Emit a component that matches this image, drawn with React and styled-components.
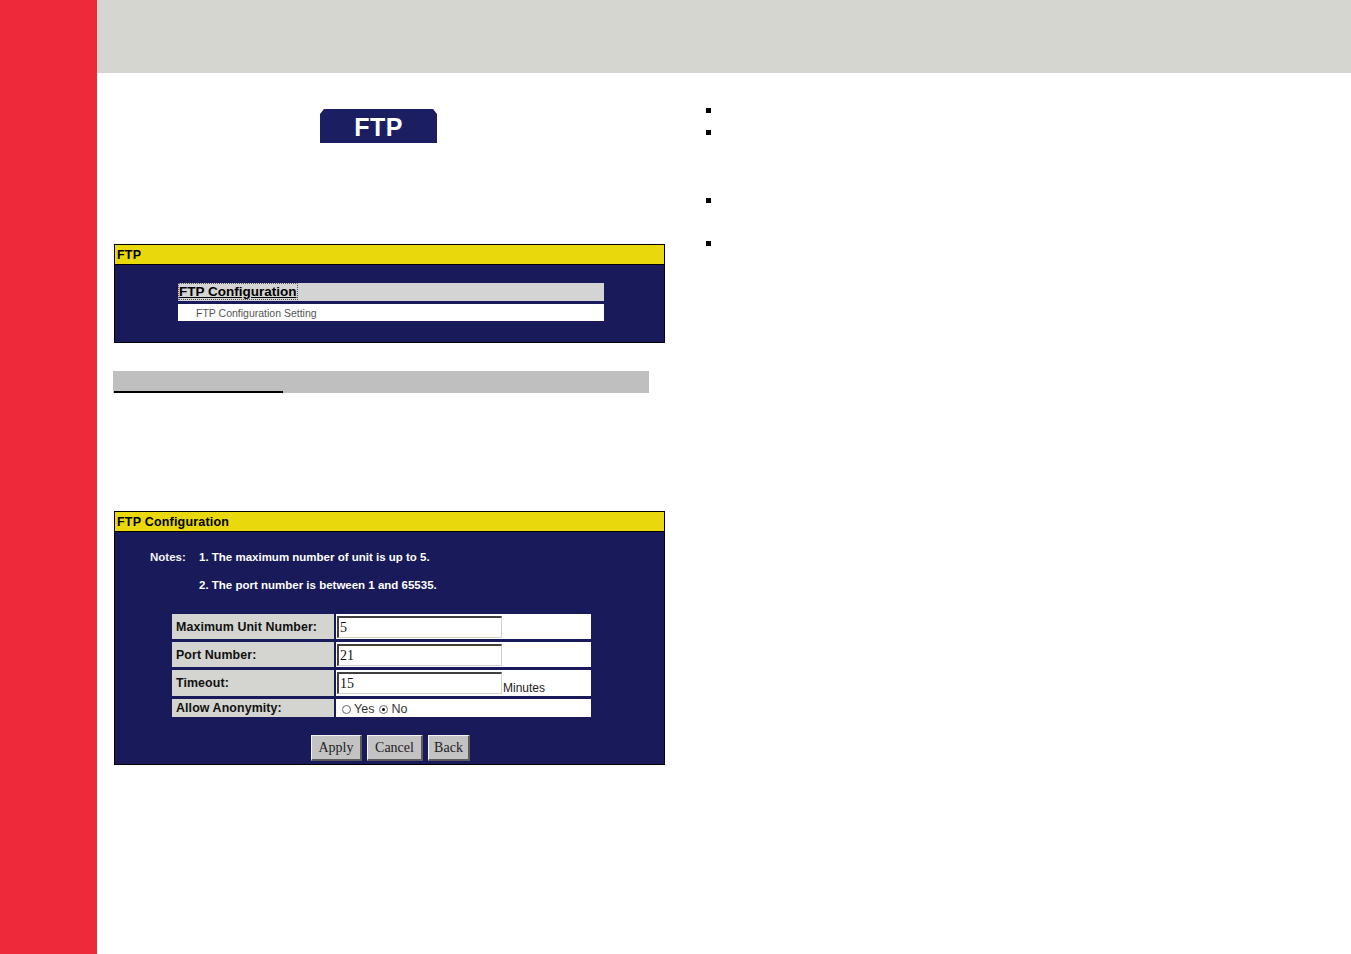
import React from 'react';
import styled, { createGlobalStyle } from 'styled-components';

const GlobalStyle = createGlobalStyle`
  html, body {
    margin: 0;
    padding: 0;
    background: #ffffff;
  }
  body {
    font-family: "Liberation Sans", Arial, sans-serif;
    overflow: hidden;
  }
`;

const Page = styled.div`
  display: flex;
  width: 1351px;
  height: 954px;
`;

const Sidebar = styled.div`
  width: 97px;
  flex-shrink: 0;
  background: #ee2a3a;
`;

const Main = styled.div`
  flex: 1;
  display: flex;
  flex-direction: column;
`;

const TopBar = styled.div`
  height: 73px;
  background: #d6d6d1;
`;

const Body = styled.div`
  display: flex;
`;

const LeftColumn = styled.div`
  width: 568px;
  padding-left: 17px;
  display: flex;
  flex-direction: column;
`;

const RightColumn = styled.ul`
  list-style: none;
  margin: 0;
  padding: 0 0 0 24px;
  display: flex;
  flex-direction: column;
`;

const Bullet = styled.li`
  width: 5px;
  height: 5px;
  background: #000;
  margin-top: ${({ $gap }) => $gap}px;
`;

const FtpBadge = styled.div`
  margin: 36px 0 0 206px;
  width: 117px;
  height: 34px;
  background: #1b1f62;
  clip-path: polygon(4px 0, calc(100% - 4px) 0, 100% 5px, 100% 100%, 0 100%, 0 5px);
  display: flex;
  align-items: center;
  justify-content: center;
  padding-top: 3px;
  box-sizing: border-box;
  color: #ffffff;
  font-family: "Liberation Sans", Arial, sans-serif;
  font-weight: bold;
  font-size: 25px;
  letter-spacing: 0.5px;
`;

const Panel = styled.div`
  margin-top: ${({ $top }) => $top}px;
  width: 549px;
  height: ${({ $height }) => $height}px;
  border: 1px solid #000;
  background: #181a5a;
  display: flex;
  flex-direction: column;
`;

const PanelHeader = styled.div`
  height: 19px;
  background: #e8d80c;
  border-bottom: 1px solid #000;
  padding-left: 2px;
  font-size: 12.5px;
  font-weight: bold;
  color: #000;
  line-height: 20px;
  letter-spacing: 0.2px;
`;

const MenuBox = styled.div`
  margin: 18px 0 0 63px;
  width: 426px;
  display: flex;
  flex-direction: column;
  gap: 3px;
`;

const MenuTitle = styled.div`
  height: 18px;
  background: #d4d4d4;
  padding-left: 1px;
  font-size: 13.5px;
  font-weight: bold;
  line-height: 18px;
  color: #000;

  span {
    text-decoration: underline;
    outline: 1px dotted #555;
  }
`;

const MenuItem = styled.div`
  height: 17px;
  background: #ffffff;
  padding-left: 18px;
  font-size: 10.5px;
  line-height: 18px;
  color: #555;
`;

const SectionBar = styled.div`
  margin: 28px 0 0 -1px;
  width: 536px;
  height: 22px;
  background: #bfbfbf;
  display: flex;
  align-items: flex-end;
`;

const SectionLine = styled.div`
  margin-left: 1px;
  width: 169px;
  height: 2px;
  background: #000;
`;

const Notes = styled.div`
  margin: 18px 0 0 35px;
  display: grid;
  grid-template-columns: 49px auto;
  row-gap: 13px;
  color: #ffffff;
  font-size: 11.5px;
  font-weight: bold;
  line-height: 15px;
`;

const NoteLabel = styled.span`
  font-weight: bold;
  opacity: 0.95;
`;

const FormTable = styled.div`
  margin: 20px 0 0 57px;
  width: 420px;
  display: grid;
  grid-template-columns: 162px 255px;
  grid-template-rows: 25px 25px 26px 18px;
  column-gap: 2px;
  row-gap: 3px;
  padding: 1px 2px 1px 0;
`;

const LabelCell = styled.div`
  background: #d4d5d0;
  padding-left: 4px;
  display: flex;
  align-items: center;
  font-size: 12.4px;
  font-weight: bold;
  color: #111;
  letter-spacing: 0.1px;
`;

const ValueCell = styled.div`
  background: #ffffff;
  padding-left: 1px;
  display: flex;
  align-items: center;
`;

const TextBox = styled.div`
  width: 161px;
  height: 19px;
  border-top: 2px solid #404040;
  border-left: 2px solid #404040;
  border-right: 1px solid #d4d0c8;
  border-bottom: 1px solid #d4d0c8;
  background: #fff;
  font-family: "Liberation Serif", "Times New Roman", serif;
  font-size: 14px;
  line-height: 19px;
  color: #111;
  padding-left: 1px;
`;

const Unit = styled.span`
  align-self: flex-end;
  margin-left: 1px;
  font-size: 12px;
  color: #222;
  line-height: 14px;
  padding-bottom: 1px;
`;

const RadioGroup = styled.div`
  display: flex;
  align-items: center;
  padding-left: 5px;
  padding-top: 2px;
  font-size: 12.5px;
  color: #333;
`;

const Radio = styled.span`
  width: 7px;
  height: 7px;
  border-radius: 50%;
  border: 1px solid #666;
  background: #fff;
  margin-right: 3px;
  display: inline-flex;
  align-items: center;
  justify-content: center;

  &::after {
    content: '';
    width: 3px;
    height: 3px;
    border-radius: 50%;
    background: ${({ $checked }) => ($checked ? '#000' : 'transparent')};
  }
`;

const RadioText = styled.span`
  margin-right: 5px;
`;

const Buttons = styled.div`
  margin: 17px 0 0 196px;
  display: flex;
  gap: 5px;
`;

const Button = styled.button`
  width: ${({ $w }) => $w}px;
  height: 26px;
  padding: 0;
  background: #c3c3c3;
  border-top: 1px solid #f4f4f4;
  border-left: 1px solid #f4f4f4;
  border-right: 2px solid #5a5a5a;
  border-bottom: 2px solid #5a5a5a;
  font-family: "Liberation Serif", "Times New Roman", serif;
  font-size: 14px;
  color: #222;
  cursor: pointer;
`;

export default function App() {
  return (
    <Page>
      <GlobalStyle />
      <Sidebar />
      <Main>
        <TopBar />
        <Body>
          <LeftColumn>
            <FtpBadge>FTP</FtpBadge>

            <Panel $top={101} $height={97}>
              <PanelHeader>FTP</PanelHeader>
              <MenuBox>
                <MenuTitle><span>FTP Configuration</span></MenuTitle>
                <MenuItem>FTP Configuration Setting</MenuItem>
              </MenuBox>
            </Panel>

            <SectionBar>
              <SectionLine />
            </SectionBar>

            <Panel $top={118} $height={252}>
              <PanelHeader>FTP Configuration</PanelHeader>
              <Notes>
                <NoteLabel>Notes:</NoteLabel>
                <span>1. The maximum number of unit is up to 5.</span>
                <span />
                <span>2. The port number is between 1 and 65535.</span>
              </Notes>

              <FormTable>
                <LabelCell>Maximum Unit Number:</LabelCell>
                <ValueCell><TextBox>5</TextBox></ValueCell>

                <LabelCell>Port Number:</LabelCell>
                <ValueCell><TextBox>21</TextBox></ValueCell>

                <LabelCell>Timeout:</LabelCell>
                <ValueCell>
                  <TextBox>15</TextBox>
                  <Unit>Minutes</Unit>
                </ValueCell>

                <LabelCell>Allow Anonymity:</LabelCell>
                <ValueCell>
                  <RadioGroup>
                    <Radio />
                    <RadioText>Yes</RadioText>
                    <Radio $checked />
                    <RadioText>No</RadioText>
                  </RadioGroup>
                </ValueCell>
              </FormTable>

              <Buttons>
                <Button type="button" $w={51}>Apply</Button>
                <Button type="button" $w={56}>Cancel</Button>
                <Button type="button" $w={42}>Back</Button>
              </Buttons>
            </Panel>
          </LeftColumn>

          <RightColumn>
            <Bullet $gap={35} />
            <Bullet $gap={17} />
            <Bullet $gap={63} />
            <Bullet $gap={38} />
          </RightColumn>
        </Body>
      </Main>
    </Page>
  );
}
